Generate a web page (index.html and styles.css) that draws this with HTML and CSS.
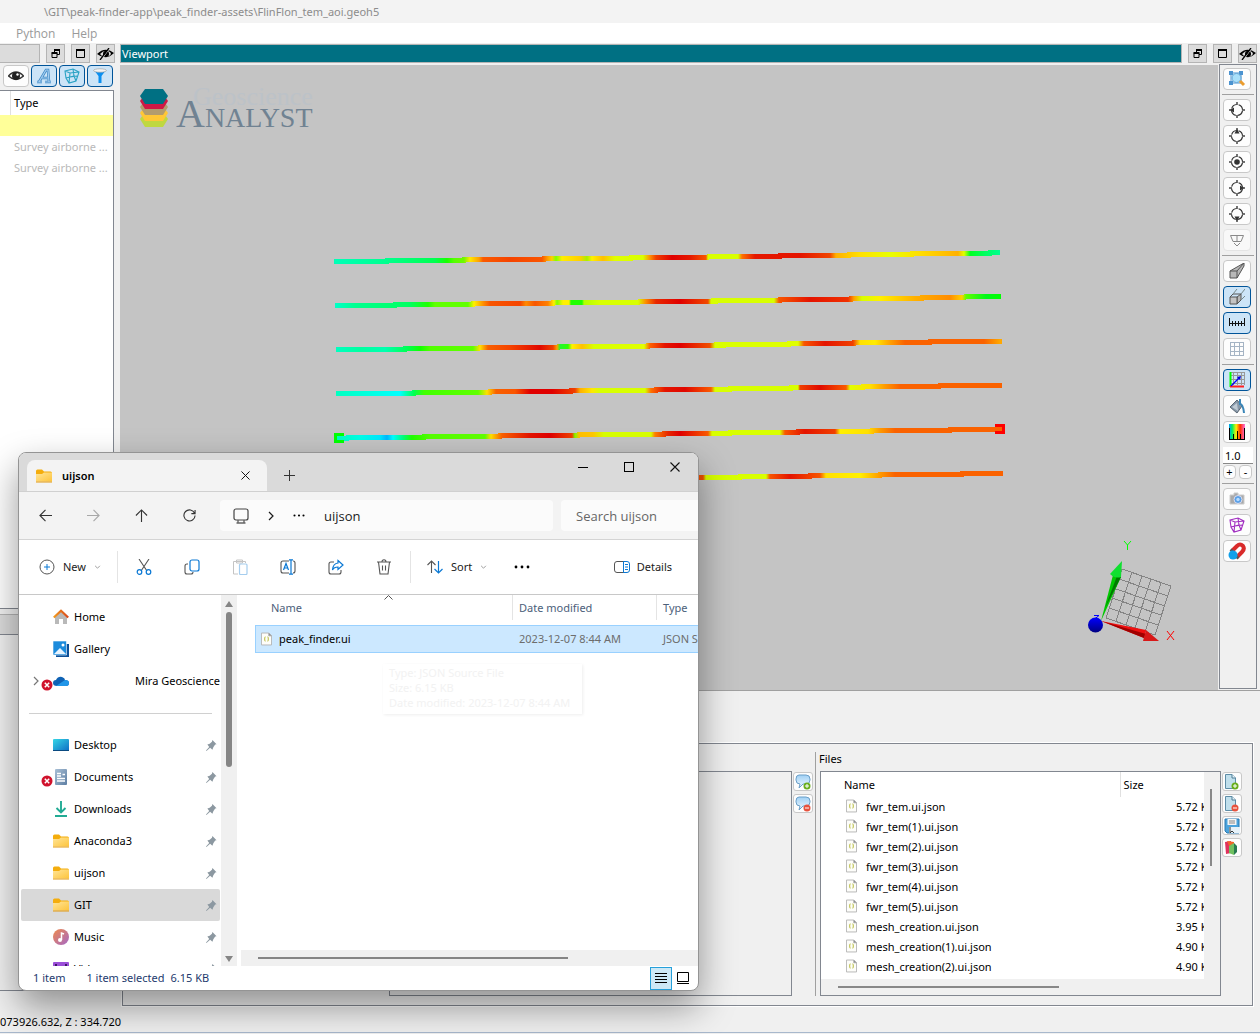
FILE: index.html
```html
<!DOCTYPE html>
<html lang="en">
<head>
<meta charset="utf-8">
<title>Geoscience ANALYST</title>
<link rel="stylesheet" href="styles.css">
</head>
<body>
<svg class="defs" aria-hidden="true">
  <defs>
    <linearGradient id="gFolder" x1="0" y1="0" x2="1" y2="1"><stop offset="0" stop-color="#ffe599"/><stop offset="1" stop-color="#fdc43c"/></linearGradient>
    <linearGradient id="gDesk" x1="0" y1="0" x2="1" y2="1"><stop offset="0" stop-color="#35d7e6"/><stop offset="1" stop-color="#0e6cc4"/></linearGradient>
    <linearGradient id="gMusic" x1="0" y1="0" x2="1" y2="1"><stop offset="0" stop-color="#f08a4b"/><stop offset="1" stop-color="#a468c8"/></linearGradient>
    <linearGradient id="gDoc" x1="0" y1="0" x2="1" y2="1"><stop offset="0" stop-color="#a9c0d6"/><stop offset="1" stop-color="#5d7ea3"/></linearGradient>
    <linearGradient id="gRoof"><stop offset="0" stop-color="#f29a1d"/><stop offset="1" stop-color="#d9471b"/></linearGradient>
    <linearGradient id="gRain"><stop offset="0" stop-color="#00a0ff"/><stop offset=".2" stop-color="#00f060"/><stop offset=".45" stop-color="#ffee00"/><stop offset=".7" stop-color="#ff3000"/><stop offset="1" stop-color="#ff70e0"/></linearGradient>
    <linearGradient id="gBubble" x1="0" y1="0" x2="0" y2="1"><stop offset="0" stop-color="#9fd0f5"/><stop offset="1" stop-color="#f2faff"/></linearGradient>
    <linearGradient id="gBall" x1="0" y1="0" x2="0" y2="1"><stop offset="0" stop-color="#0000ff"/><stop offset="1" stop-color="#000080"/></linearGradient>
  </defs>
  <symbol id="restore" viewBox="0 0 9 9"><path d="M3.500 3V1.500H8.500V5.500H6M1 4.500H6V8.500H1Z" fill="none" stroke="#000"/><path d="M3 1H9M0.500 4H6.500" stroke="#000" stroke-width="2"/></symbol>
  <symbol id="maxi" viewBox="0 0 9 9"><path d="M.5 1.500H8.500V8.500H.5Z" fill="none" stroke="#000"/><path d="M0 1H9" stroke="#000" stroke-width="2"/></symbol>
  <symbol id="hidden" viewBox="0 0 17 12"><path d="M0 6Q8-2 17 5Q9 13 0 6Z" fill="#000"/><path d="M3 6Q6 3 8 3Q5 6 8 9Q5 9 3 6ZM11 3Q14 4 14 6Q13 8 10 9Q12 6 11 3Z" fill="#dcdcdc"/><circle cx="9" cy="6" r="3"/><path d="M4 12L13 0" stroke="#dcdcdc"/><path d="M3 12L12 0" stroke="#000" stroke-width="1.300"/></symbol>
  <symbol id="eye" viewBox="0 0 16 12"><path d="M.5 6Q8-2 15.500 6Q8 13 .5 6Z" fill="#fff" stroke="#333" stroke-width="1.500"/><circle cx="8" cy="6" r="4" fill="#222"/><circle cx="9.500" cy="4.500" r="1.200" fill="#fff"/></symbol>
  <symbol id="wire" viewBox="0 0 16 16"><path d="M1 3L9 1L15 4L12 13L5 15L2 10ZM1 3L6 5L15 4M6 5L5 15M9 1L10 8L12 13M10 8L2 10M6 9L13 8" fill="none" stroke="currentColor" stroke-width="1.100"/></symbol>
  <symbol id="funnel" viewBox="0 0 16 16"><path d="M2 2H14L9.500 8V15H6.500V8Z" fill="#0a8ff0"/><ellipse cx="8" cy="2.500" rx="6.500" ry="1.700" fill="#f4f4f4" stroke="#999" stroke-width=".6"/></symbol>
  <symbol id="ital" viewBox="0 0 16 16"><path d="M1 14H6M9 14H15M3 14L10 2H12L13 14M6 10H12" fill="none" stroke="#3e88c5" stroke-width="2.600"/><path d="M1 14H6M9 14H15M3 14L10 2H12L13 14M6 10H12" fill="none" stroke="#a4cdf0" stroke-width="1.200"/></symbol>
  <symbol id="zoomsel" viewBox="0 0 18 18"><path d="M3 3H13V13H3Z" fill="none" stroke="#4b93d0"/><path d="M1 1H5V5H1ZM11 1H15V5H11ZM1 11H5V15H1Z" fill="#4b93d0"/><circle cx="8.500" cy="8" r="4.500" fill="#a9e0fa" stroke="#62a6d8"/><path d="M12 11L16 15" stroke="#eb9c2d" stroke-width="3"/></symbol>
  <symbol id="ring" viewBox="0 0 16 16"><circle cx="8" cy="8" r="5.500" fill="none" stroke="#333" stroke-width="1.200" stroke-dasharray="6.600 2.040" stroke-dashoffset="-1"/><path d="M0 8H3M13 8H16M8 0V3M8 13V16" stroke="#444" stroke-width="1.500"/></symbol>
  <symbol id="west" viewBox="0 0 16 16"><use href="#ring"/><path d="M1 8L5 5.500V10.500Z" fill="#333"/></symbol>
  <symbol id="north" viewBox="0 0 16 16"><use href="#ring"/><path d="M8 1L5.500 5.500H10.500Z" fill="#333"/></symbol>
  <symbol id="mid" viewBox="0 0 16 16"><use href="#ring"/><circle cx="8" cy="8" r="2.800" fill="#333"/></symbol>
  <symbol id="east" viewBox="0 0 16 16"><use href="#ring"/><path d="M15 8L11 5.500V10.500Z" fill="#333"/></symbol>
  <symbol id="south" viewBox="0 0 16 16"><use href="#ring"/><path d="M8 15L5.500 10.500H10.500Z" fill="#333"/></symbol>
  <symbol id="section" viewBox="0 0 16 16"><path d="M1.500 3.500H14.500L12 9.500H4ZM8 3V10M5 11L8 14L11 11" fill="none" stroke="#888"/></symbol>
  <symbol id="persp" viewBox="0 0 16 16"><path d="M1 8H8V15H1ZM1 8L15 0V3L8 15M8 8L15 0" fill="#b8b8b8" stroke="#555"/></symbol>
  <symbol id="ortho" viewBox="0 0 16 16"><path d="M4 5H12V11L8 15V8L12 5M1 8L4 5" fill="#b8b8b8" stroke="#555"/><path d="M1 8H8V15H1Z" fill="#c4c4c4" stroke="#555"/><path d="M4 5L8 0M12 5L16 0M12 11L16 7" stroke="#788" fill="none"/></symbol>
  <symbol id="ruler" viewBox="0 0 16 16"><path d="M.5 3V11M15.500 3V11M3.500 6V11M6.500 6V11M9.500 6V11M12.500 6V11M0 8.500H16" stroke="#111" fill="none"/></symbol>
  <symbol id="grid" viewBox="0 0 16 16"><path d="M1.500 1V15M5.500 1V15M10.500 1V15M14.500 1V15M1 1.500H15M1 5.500H15M1 10.500H15M1 14.500H15" stroke="#a5b4c4" fill="none"/></symbol>
  <symbol id="axes" viewBox="0 0 16 16"><path d="M4.500 0V13M8.500 0V13M12.500 0V13M2 3.500H16M2 7.500H16M2 11.500H16M15.500 0V13M2 .5H16" stroke="#999" fill="none"/><path d="M1.500 0V15" stroke="#0f0" stroke-width="2"/><path d="M1 14.500H15" stroke="#f22" stroke-width="2"/><path d="M2 14L10 6" stroke="#00f" stroke-width="1.300"/><path d="M12 4L8 5L11 8Z" fill="#00d"/></symbol>
  <symbol id="bucket" viewBox="0 0 16 16"><path d="M1 9L8 2L13 8L8 15Z" fill="#8797a8" stroke="#5a6774"/><path d="M3 9L8 5L9 13Z" fill="#c0cbd5"/><path d="M11 1V6Q14 6 15 15" fill="none" stroke="#3a86b8" stroke-width="2"/></symbol>
  <symbol id="hist" viewBox="0 0 16 16"><path d="M0 0H16V16H0Z" fill="url(#gRain)"/><path d="M.5 4V16M4.500 10V16M8.500 7V16M11.500 10V16M15.500 4V16M0 15.500H16" stroke="#000"/></symbol>
  <symbol id="camera" viewBox="0 0 16 16"><path d="M1 4H5V2H9V4H15V13H1Z" fill="#aaa" stroke="#ccc"/><circle cx="9" cy="8.500" r="4" fill="#5aa0e8" stroke="#dde"/><circle cx="9" cy="8.500" r="1.700" fill="#b7dcff"/></symbol>
  <symbol id="magnet" viewBox="0 0 18 18"><path d="M4 9L9 4Q12 1 15 4Q17 7 14 10L9 15" fill="none" stroke="#d92b2b" stroke-width="4"/><path d="M3 10L5 8M8 16L10 14" stroke="#555" stroke-width="4"/><circle cx="5" cy="13" r="4.500" fill="#10a0ea"/></symbol>
  <symbol id="folder" viewBox="0 0 16 14"><path d="M0 2Q0 .5 1.500 .5H6L8 2.500H14.500Q16 2.500 16 4V12H0Z" fill="#f4ad0d"/><path d="M0 5H6L8 3.500H16V12.500H0Z" fill="url(#gFolder)"/><path d="M0 13H16" stroke="#e29a12"/></symbol>
  <symbol id="json" viewBox="0 0 12 14"><path d="M.5 .5H8.500L11.500 3.500V13.500H.5Z" fill="#fdfdfa" stroke="#b4b4b4"/><path d="M8.500 .5V3.500H11.500" fill="#888" stroke="#aaa"/><path d="M5 4.500Q4 4.500 4 7Q4 9.500 5 9.500M7 4.500Q8 4.500 8 7Q8 9.500 7 9.500" fill="none" stroke="#bcbf48" stroke-width="1.200"/></symbol>
  <symbol id="home" viewBox="0 0 16 16"><path d="M2 7L8 2L14 7V15H10V10H6V15H2Z" fill="#b9b9b9"/><path d="M.8 8.500L8 1.800L15.200 8.500" fill="none" stroke="url(#gRoof)" stroke-width="2.200"/></symbol>
  <symbol id="gallery" viewBox="0 0 16 16"><path d="M3 3H16V16H3Z" fill="#0c4f98"/><path d="M0 0H13.500V14H0Z" fill="#1c8bdc" stroke="#fff" stroke-width=".6"/><path d="M1 13L7 7L13 13Z" fill="#e8f4ff"/><circle cx="10" cy="4" r="1.500" fill="#fff"/></symbol>
  <symbol id="cloud" viewBox="0 0 16 12"><path d="M4 11Q0 11 0 8Q0 5 3 5Q5 1 9 2Q12 3 12 5Q16 5 16 8Q16 11 13 11Z" fill="#0f62b4"/><path d="M3 11L12 5Q16 5 16 8Q16 11 13 11Z" fill="#2196e8"/></symbol>
  <symbol id="err" viewBox="0 0 12 12"><circle cx="6" cy="6" r="5.500" fill="#d0122c"/><path d="M3.800 3.800L8.200 8.200M8.200 3.800L3.800 8.200" stroke="#fff" stroke-width="1.500"/></symbol>
  <symbol id="desk" viewBox="0 0 16 12"><rect width="16" height="12" rx="1" fill="url(#gDesk)"/><path d="M0 11.500H16" stroke="#0a4a80"/></symbol>
  <symbol id="doc" viewBox="0 0 12 16"><rect width="12" height="16" rx="1" fill="url(#gDoc)"/><path d="M2 4.500H6M2 7H6M2 9.500H10M2 12H10M7.500 5.500H10" stroke="#fff" stroke-width="1.300"/></symbol>
  <symbol id="down" viewBox="0 0 12 16"><path d="M6 0V11M1.500 7L6 11.500L10.500 7M0 15H12" fill="none" stroke="#22ab94" stroke-width="1.900"/></symbol>
  <symbol id="music" viewBox="0 0 16 16"><circle cx="8" cy="8" r="8" fill="url(#gMusic)"/><path d="M8.500 11V4L11 5" fill="none" stroke="#fff" stroke-width="1.500"/><circle cx="7" cy="11" r="2" fill="#fff"/></symbol>
  <symbol id="video" viewBox="0 0 16 14"><rect width="16" height="14" rx="1" fill="#9b4fd8"/><path d="M2 3H4M12 3H14" stroke="#3e1768" stroke-width="2"/><path d="M6 4L11 7L6 10Z" fill="#fff"/></symbol>
  <symbol id="pin" viewBox="0 0 12 12"><path d="M7 0L11.500 4.500L10 5L8 8L7 10.500L4.500 8.500L.5 12L0 11.500L3.500 7.500L1.500 5L4 4L6.500 2Z" fill="#8c98a1"/></symbol>
  <symbol id="cut" viewBox="0 0 16 16"><path d="M3 0L11 12M13 0L5 12" stroke="#555" stroke-width="1.100"/><circle cx="3.500" cy="13" r="2.300" fill="none" stroke="#0a78d4" stroke-width="1.200"/><circle cx="12.500" cy="13" r="2.300" fill="none" stroke="#0a78d4" stroke-width="1.200"/></symbol>
  <symbol id="copy" viewBox="0 0 16 16"><path d="M4 5H3Q1 5 1 7V13Q1 15 3 15H7Q9 15 9 13" fill="none" stroke="#555" stroke-width="1.100"/><rect x="6" y="1" width="9" height="11" rx="2" fill="none" stroke="#0a78d4" stroke-width="1.200"/></symbol>
  <symbol id="paste" viewBox="0 0 16 16"><path d="M6 15H1.500V2.500H13.500V4M4.500 1H10.500V4H4.500Z" fill="none" stroke="#c4c4c4"/><rect x="7.500" y="5" width="7.500" height="10.500" rx="1" fill="none" stroke="#a5cdee" stroke-width="1.200"/></symbol>
  <symbol id="rename" viewBox="0 0 16 16"><path d="M9 2H3Q1 2 1 4V12Q1 14 3 14H9M13 2Q15 2 15 4V12Q15 14 13 14" fill="none" stroke="#555" stroke-width="1.100"/><path d="M11 1V15M9 .8H13M9 15.200H13M3.500 11L6 4.500L8.500 11M4.500 9H7.500" fill="none" stroke="#0a78d4" stroke-width="1.200"/></symbol>
  <symbol id="share" viewBox="0 0 16 16"><path d="M6 3H3Q1 3 1 5V13Q1 15 3 15H11Q13 15 13 13V11" fill="none" stroke="#555" stroke-width="1.100"/><path d="M10 1.500L15 6L10 10.500V8Q6 8 4.500 11Q5 4.500 10 4Z" fill="none" stroke="#0a78d4" stroke-width="1.200"/></symbol>
  <symbol id="trash" viewBox="0 0 16 16"><path d="M1 3H15M6 3Q6 .8 8 .8Q10 .8 10 3M2.500 3L4 15H12L13.500 3M6.500 6.500V11.500M9.500 6.500V11.500" fill="none" stroke="#555" stroke-width="1.100"/></symbol>
  <symbol id="sort" viewBox="0 0 16 14"><path d="M4.500 13V1M.5 5L4.500 1L8.500 5" fill="none" stroke="#555" stroke-width="1.100"/><path d="M11.500 1V13M7.500 9L11.500 13L15.500 9" fill="none" stroke="#0a78d4" stroke-width="1.200"/></symbol>
  <symbol id="details" viewBox="0 0 16 12"><path d="M10 .5H3Q.5 .5 .5 3V9Q.5 11.500 3 11.500H10" fill="none" stroke="#555"/><path d="M9.500 .5H13Q15.500 .5 15.500 3V9Q15.500 11.500 13 11.500H9.500ZM11 3.500H14M11 6H14M11 8.500H14" fill="none" stroke="#0a78d4"/></symbol>
  <symbol id="chev" viewBox="0 0 8 5"><path d="M1 1L4 4L7 1" fill="none" stroke="currentColor"/></symbol>
  <symbol id="chevr" viewBox="0 0 6 10"><path d="M1 1L5 5L1 9" fill="none" stroke="currentColor" stroke-width="1.200"/></symbol>
  <symbol id="x" viewBox="0 0 10 10"><path d="M.5 .5L9.500 9.500M9.500 .5L.5 9.500" stroke="#111" fill="none" stroke-width="1.100"/></symbol>
  <symbol id="left" viewBox="0 0 14 14"><path d="M14 7H1M7 1L1 7L7 13" fill="none" stroke="currentColor" stroke-width="1.200"/></symbol>
  <symbol id="right" viewBox="0 0 14 14"><path d="M0 7H13M7 1L13 7L7 13" fill="none" stroke="currentColor" stroke-width="1.200"/></symbol>
  <symbol id="up" viewBox="0 0 14 14"><path d="M7 14V1M1 7L7 1L13 7" fill="none" stroke="currentColor" stroke-width="1.200"/></symbol>
  <symbol id="reload" viewBox="0 0 14 14"><path d="M12.500 4.500A6 6 0 1 0 13 7M13 1V5H9" fill="none" stroke="currentColor" stroke-width="1.200"/></symbol>
  <symbol id="pc" viewBox="0 0 16 16"><rect x="1" y="1" width="14" height="11" rx="2" fill="none" stroke="#444" stroke-width="1.200"/><path d="M5 12V15M11 12V15M3.500 15H12.500" stroke="#666" stroke-width="1.400"/></symbol>
  <symbol id="dots" viewBox="0 0 16 4"><circle cx="2" cy="2" r="1.400"/><circle cx="8" cy="2" r="1.400"/><circle cx="14" cy="2" r="1.400"/></symbol>
  <symbol id="plusbadge" viewBox="0 0 8 8"><circle cx="4" cy="4" r="3.500" fill="#69ae1b"/><path d="M2 4H6M4 2V6" stroke="#fff"/></symbol>
  <symbol id="minusbadge" viewBox="0 0 8 8"><circle cx="4" cy="4" r="3.500" fill="#e7523d"/><path d="M2 4H6" stroke="#fff"/></symbol>
  <symbol id="bubble" viewBox="0 0 16 16"><path d="M4 1H11Q15 1 15 5V6Q15 10 11 10H8L4 14L5 10Q1 10 1 6V5Q1 1 4 1Z" fill="url(#gBubble)" stroke="#6b9fc8"/></symbol>
  <symbol id="page" viewBox="0 0 16 16"><path d="M1.500 .5H8L11.500 4V14.500H1.500Z" fill="#c0dfec" stroke="#5d8ca6"/><path d="M8 .5V4H11.500" fill="#eaf6fb" stroke="#4d7c96"/></symbol>
  <symbol id="bubbleadd" viewBox="0 0 16 16"><use href="#bubble"/><use href="#plusbadge" x="8" y="8" width="8" height="8"/></symbol>
  <symbol id="bubbledel" viewBox="0 0 16 16"><use href="#bubble"/><use href="#minusbadge" x="8" y="8" width="8" height="8"/></symbol>
  <symbol id="pageadd" viewBox="0 0 16 16"><use href="#page"/><use href="#plusbadge" x="7" y="8" width="8" height="8"/></symbol>
  <symbol id="pagedel" viewBox="0 0 16 16"><use href="#page"/><use href="#minusbadge" x="7" y="8" width="8" height="8"/></symbol>
  <symbol id="save" viewBox="0 0 16 16"><path d="M1 1H15V15H3L1 13Z" fill="#4ba3dc" stroke="#2b79b0"/><path d="M3.500 1H12.500V7H3.500Z" fill="#f4f4f4"/><path d="M5 3H11M5 5H11" stroke="#888"/><path d="M5 9H16V15H5Z" fill="#e6f1f8"/><path d="M6 9V15L8 13L10 15" stroke="#333" fill="none"/></symbol>
  <symbol id="cube" viewBox="0 0 16 16"><path d="M1 2L7 1V13L2 14Z" fill="#e0325f"/><path d="M3 1L10 2V6L6 8Z" fill="#f0642a"/><path d="M5 6L10 3V15L5 13Z" fill="#70c060"/><path d="M10 3L13 6V12L10 15Z" fill="#277a50"/></symbol>
</svg>

<header class="titlebar">\GIT\peak-finder-app\peak_finder-assets\FlinFlon_tem_aoi.geoh5</header>
<nav class="menubar"><a href="#">Python</a><a href="#">Help</a></nav>

<main class="workspace">
  <aside class="sidebar">
    <div class="dockhead"><div class="dockname blank"></div><button class="dockbtn" aria-label="Float"><svg width="9" height="9"><use href="#restore"/></svg></button><button class="dockbtn" aria-label="Maximize"><svg width="9" height="9"><use href="#maxi"/></svg></button><button class="dockbtn" aria-label="Hide"><svg width="17" height="12"><use href="#hidden"/></svg></button></div>
    <div class="treetools">
      <button class="tool" aria-label="Show"><svg width="16" height="12"><use href="#eye"/></svg></button>
      <button class="tool on" aria-label="Text"><svg width="16" height="16"><use href="#ital"/></svg></button>
      <button class="tool on cyan" aria-label="Wireframe"><svg width="16" height="16"><use href="#wire"/></svg></button>
      <button class="tool on" aria-label="Filter"><svg width="16" height="16"><use href="#funnel"/></svg></button>
    </div>
    <table class="tree"><thead><tr><th class="cut"></th><th>Type</th></tr></thead>
      <tbody><tr class="hl"><td></td><td></td></tr><tr><td></td><td>Survey airborne ...</td></tr><tr><td></td><td>Survey airborne ...</td></tr><tr class="rest"><td></td><td></td></tr></tbody></table>
    <div class="lowerhead"></div>
    <div class="lowerpane"></div>
  </aside>

  <section class="center">
    <div class="dockhead"><div class="dockname">Viewport</div><button class="dockbtn" aria-label="Float"><svg width="9" height="9"><use href="#restore"/></svg></button><button class="dockbtn" aria-label="Maximize"><svg width="9" height="9"><use href="#maxi"/></svg></button><button class="dockbtn" aria-label="Hide"><svg width="17" height="12"><use href="#hidden"/></svg></button></div>
    <div class="view">
      <svg class="scene" role="img" aria-label="Survey lines">
        <defs>
          <linearGradient id="l1" gradientUnits="userSpaceOnUse" x1="0" x2="1000" y1="0" y2="0"><stop offset=".334" stop-color="#00ffb8"/><stop offset=".385" stop-color="#00ff90"/><stop offset=".435" stop-color="#00ff50"/><stop offset=".447" stop-color="#18ff00"/><stop offset=".454" stop-color="#55ff00"/><stop offset=".464" stop-color="#70f800"/><stop offset=".47" stop-color="#ffe800"/><stop offset=".479" stop-color="#ffa000"/><stop offset=".483" stop-color="#fa5a00"/><stop offset=".51" stop-color="#f54400"/><stop offset=".542" stop-color="#fa5500"/><stop offset=".548" stop-color="#ffa500"/><stop offset=".552" stop-color="#ffd000"/><stop offset=".556" stop-color="#80ff00"/><stop offset=".562" stop-color="#ffee00"/><stop offset=".58" stop-color="#ffd000"/><stop offset=".587" stop-color="#a8f000"/><stop offset=".592" stop-color="#fff000"/><stop offset=".603" stop-color="#ffc000"/><stop offset=".615" stop-color="#e0ff00"/><stop offset=".643" stop-color="#d8ff00"/><stop offset=".65" stop-color="#ff9000"/><stop offset=".656" stop-color="#f04000"/><stop offset=".672" stop-color="#e00000"/><stop offset=".69" stop-color="#e51800"/><stop offset=".706" stop-color="#f85500"/><stop offset=".708" stop-color="#d8ff00"/><stop offset=".738" stop-color="#d8ff00"/><stop offset=".742" stop-color="#ff7000"/><stop offset=".755" stop-color="#e51800"/><stop offset=".8" stop-color="#e41400"/><stop offset=".83" stop-color="#f04500"/><stop offset=".836" stop-color="#ffb000"/><stop offset=".86" stop-color="#ffe000"/><stop offset=".89" stop-color="#e8ff00"/><stop offset=".92" stop-color="#ffdd00"/><stop offset=".958" stop-color="#ffb000"/><stop offset=".964" stop-color="#e0ff00"/><stop offset=".97" stop-color="#00ff20"/><stop offset=".985" stop-color="#00ff60"/><stop offset="1" stop-color="#00ff90"/></linearGradient>
          <linearGradient id="l2" gradientUnits="userSpaceOnUse" x1="0" x2="1000" y1="0" y2="0"><stop offset=".335" stop-color="#00ffc8"/><stop offset=".355" stop-color="#00ff90"/><stop offset=".41" stop-color="#00ff60"/><stop offset=".428" stop-color="#20ff00"/><stop offset=".435" stop-color="#60ff00"/><stop offset=".468" stop-color="#60ff00"/><stop offset=".474" stop-color="#fff000"/><stop offset=".484" stop-color="#ff8800"/><stop offset=".49" stop-color="#f85500"/><stop offset=".52" stop-color="#f54400"/><stop offset=".526" stop-color="#ff8a00"/><stop offset=".535" stop-color="#f85500"/><stop offset=".548" stop-color="#ff8000"/><stop offset=".554" stop-color="#fff000"/><stop offset=".557" stop-color="#80ff00"/><stop offset=".563" stop-color="#fff000"/><stop offset=".569" stop-color="#fff000"/><stop offset=".571" stop-color="#20ff00"/><stop offset=".582" stop-color="#20ff00"/><stop offset=".584" stop-color="#b0ff00"/><stop offset=".6" stop-color="#d8ff00"/><stop offset=".638" stop-color="#d8ff00"/><stop offset=".646" stop-color="#ff8a00"/><stop offset=".656" stop-color="#e82800"/><stop offset=".68" stop-color="#e00000"/><stop offset=".708" stop-color="#f04a00"/><stop offset=".711" stop-color="#d8ff00"/><stop offset=".774" stop-color="#d8ff00"/><stop offset=".779" stop-color="#f85500"/><stop offset=".81" stop-color="#e41400"/><stop offset=".848" stop-color="#f03000"/><stop offset=".854" stop-color="#ffa000"/><stop offset=".862" stop-color="#d8ff00"/><stop offset=".88" stop-color="#fff000"/><stop offset=".915" stop-color="#ffb000"/><stop offset=".95" stop-color="#ff8c00"/><stop offset=".962" stop-color="#ffd000"/><stop offset=".966" stop-color="#60ff00"/><stop offset=".986" stop-color="#00f818"/><stop offset="1" stop-color="#00ff00"/></linearGradient>
          <linearGradient id="l3" gradientUnits="userSpaceOnUse" x1="0" x2="1000" y1="0" y2="0"><stop offset=".336" stop-color="#00ffc0"/><stop offset=".36" stop-color="#00ffa0"/><stop offset=".385" stop-color="#00ffb0"/><stop offset=".408" stop-color="#00ff50"/><stop offset=".42" stop-color="#10ff00"/><stop offset=".43" stop-color="#50ff00"/><stop offset=".473" stop-color="#60ff00"/><stop offset=".48" stop-color="#ffe000"/><stop offset=".488" stop-color="#f86000"/><stop offset=".51" stop-color="#f54400"/><stop offset=".54" stop-color="#e00800"/><stop offset=".553" stop-color="#f04000"/><stop offset=".557" stop-color="#ffa000"/><stop offset=".56" stop-color="#20f830"/><stop offset=".568" stop-color="#30ff00"/><stop offset=".572" stop-color="#fff000"/><stop offset=".582" stop-color="#ffc000"/><stop offset=".594" stop-color="#d8ff00"/><stop offset=".644" stop-color="#e0ff00"/><stop offset=".65" stop-color="#ff6000"/><stop offset=".665" stop-color="#e41400"/><stop offset=".68" stop-color="#e00000"/><stop offset=".71" stop-color="#f05000"/><stop offset=".715" stop-color="#d8ff00"/><stop offset=".798" stop-color="#e0ff00"/><stop offset=".804" stop-color="#f85500"/><stop offset=".825" stop-color="#e41400"/><stop offset=".853" stop-color="#f04000"/><stop offset=".86" stop-color="#ffe000"/><stop offset=".875" stop-color="#ffec00"/><stop offset=".89" stop-color="#ffa000"/><stop offset=".905" stop-color="#fa6200"/><stop offset=".984" stop-color="#fa6200"/><stop offset="1" stop-color="#ffa800"/></linearGradient>
          <linearGradient id="l4" gradientUnits="userSpaceOnUse" x1="0" x2="1000" y1="0" y2="0"><stop offset=".336" stop-color="#00ffc0"/><stop offset=".37" stop-color="#00ffe0"/><stop offset=".4" stop-color="#00ffff"/><stop offset=".414" stop-color="#00ff50"/><stop offset=".424" stop-color="#40ff00"/><stop offset=".478" stop-color="#60ff00"/><stop offset=".487" stop-color="#ffe000"/><stop offset=".496" stop-color="#f86000"/><stop offset=".515" stop-color="#fa5500"/><stop offset=".53" stop-color="#e00000"/><stop offset=".552" stop-color="#e00000"/><stop offset=".575" stop-color="#f04000"/><stop offset=".58" stop-color="#ffb000"/><stop offset=".592" stop-color="#ffe800"/><stop offset=".6" stop-color="#d8ff00"/><stop offset=".645" stop-color="#d8ff00"/><stop offset=".651" stop-color="#ff7000"/><stop offset=".665" stop-color="#e41400"/><stop offset=".685" stop-color="#e00800"/><stop offset=".711" stop-color="#fa5a00"/><stop offset=".715" stop-color="#d8ff00"/><stop offset=".798" stop-color="#d8ff00"/><stop offset=".8" stop-color="#f04000"/><stop offset=".82" stop-color="#e00a00"/><stop offset=".846" stop-color="#fa5a00"/><stop offset=".85" stop-color="#e0ff00"/><stop offset=".87" stop-color="#ffe000"/><stop offset=".885" stop-color="#ff9a00"/><stop offset=".9" stop-color="#fa6200"/></linearGradient>
          <linearGradient id="l5" gradientUnits="userSpaceOnUse" x1="0" x2="1000" y1="0" y2="0"><stop offset=".337" stop-color="#00ffc0"/><stop offset=".36" stop-color="#00ffe8"/><stop offset=".38" stop-color="#00e8ff"/><stop offset=".387" stop-color="#00b8ff"/><stop offset=".393" stop-color="#00ffff"/><stop offset=".403" stop-color="#00ff80"/><stop offset=".412" stop-color="#20ff00"/><stop offset=".43" stop-color="#55ff00"/><stop offset=".485" stop-color="#60ff00"/><stop offset=".491" stop-color="#ffe000"/><stop offset=".502" stop-color="#fa6000"/><stop offset=".53" stop-color="#e41400"/><stop offset=".55" stop-color="#e00000"/><stop offset=".572" stop-color="#f04000"/><stop offset=".575" stop-color="#80ff00"/><stop offset=".579" stop-color="#ffc000"/><stop offset=".593" stop-color="#ffc800"/><stop offset=".604" stop-color="#d8ff00"/><stop offset=".651" stop-color="#d8ff00"/><stop offset=".655" stop-color="#ff8000"/><stop offset=".668" stop-color="#e82800"/><stop offset=".68" stop-color="#e00000"/><stop offset=".708" stop-color="#fa5a00"/><stop offset=".712" stop-color="#d8ff00"/><stop offset=".78" stop-color="#d8ff00"/><stop offset=".785" stop-color="#f85500"/><stop offset=".805" stop-color="#e41400"/><stop offset=".835" stop-color="#f04000"/><stop offset=".84" stop-color="#fff000"/><stop offset=".868" stop-color="#ffe000"/><stop offset=".88" stop-color="#ff9a00"/><stop offset=".895" stop-color="#fa6200"/></linearGradient>
          <linearGradient id="l6" gradientUnits="userSpaceOnUse" x1="0" x2="1000" y1="0" y2="0"><stop offset=".703" stop-color="#f05000"/><stop offset=".706" stop-color="#d8ff00"/><stop offset=".766" stop-color="#d8ff00"/><stop offset=".77" stop-color="#f85500"/><stop offset=".79" stop-color="#e41400"/><stop offset=".82" stop-color="#f85500"/><stop offset=".826" stop-color="#ffe000"/><stop offset=".86" stop-color="#fff000"/><stop offset=".88" stop-color="#ff9a00"/><stop offset=".895" stop-color="#fa6200"/></linearGradient>
        </defs>
        <g transform="translate(-120 -65)">
          <path d="M145 89H163L168 96L163 104H145L140 96Z" fill="#bfd840" transform="translate(0 23)"/>
          <path d="M145 89H163L168 96L163 104H145L140 96Z" fill="#ffc736" transform="translate(0 17)"/>
          <path d="M145 89H163L168 96L163 104H145L140 96Z" fill="#b39c6e" transform="translate(0 11)"/>
          <path d="M145 89H163L168 96L163 104H145L140 96Z" fill="#d01745" transform="translate(0 5)"/>
          <path d="M145 89H163L168 96L163 104H145L140 96Z" fill="#007083"/>
          <text class="geo" x="193" y="105">Geoscience</text>
          <text class="ana" x="176" y="127"><tspan class="big">A</tspan>NALYST</text>
          <g fill="none" stroke-width="5" shape-rendering="crispEdges">
            <path stroke="url(#l1)" d="M334 261.500H389M385 260.500H466M462 259.500H546M542 258.500H633M629 257.500H709M707 256.500H782M778 255.500H851M847 254.500H914M910 253.500H992M988 252.500H1000"/>
            <path stroke="url(#l2)" d="M335 305.500H397M393 304.500H475M471 303.500H555M551 302.500H640M638 301.500H718M711 300.500H782M778 299.500H853M849 298.500H924M920 297.500H966M964 296.500H1001"/>
            <path stroke="url(#l3)" d="M336 349.500H407M403 348.500H480M478 347.500H560M557 346.500H650M646 345.500H726M714 344.500H791M787 343.500H856M852 342.500H932M928 341.500H1002"/>
            <path stroke="url(#l4)" d="M336 393.500H416M412 392.500H492M488 391.500H573M569 390.500H658M654 389.500H732M728 388.500H793M789 387.500H865M861 386.500H941M938 385.500H1002"/>
            <path stroke="url(#l5)" d="M337 438.500H349M346 437.500H426M422 436.500H502M498 435.500H580M577 434.500H666M662 433.500H732M728 432.500H800M796 431.500H874M870 430.500H952M948 429.500H1003"/>
            <path stroke="url(#l6)" d="M690 477.500H742M738 476.500H812M808 475.500H882M878 474.500H964M960 473.500H1003"/>
            <path stroke="#0f0" stroke-width="3" d="M344 434.500H335.500V441.500H344"/>
            <path stroke="#f00" stroke-width="3" d="M995 425.500H1003.500V432.500H995"/>
          </g>
          <path d="M1122 569L1171 586L1155 635L1106 618ZM1132 572L1116 621M1142 576L1126 625M1151 579L1135 628M1161 583L1145 632M1119 579L1168 596M1116 589L1165 606M1112 598L1161 615M1109 608L1158 625" fill="none" stroke="#848484" shape-rendering="crispEdges"/>
          <path d="M1101 621L1113 575L1121 577Z" fill="#00c800"/><path d="M1105 608L1117 576L1121 577Z" fill="#007a00"/><path d="M1122 561L1110 574Q1115 579 1121 577Z" fill="#10e030"/>
          <path d="M1101 621L1146 630L1144 638Z" fill="#f01010"/><path d="M1101 621L1146 634L1144 638Z" fill="#a00000"/><path d="M1159 641L1146 630L1143 641Z" fill="#d81818"/>
          <circle cx="1095.500" cy="625" r="7.500" fill="url(#gBall)"/>
          <path d="M1094 615.500H1099L1094 619.500" fill="none" stroke="#00f"/>
          <path d="M1124 541L1127.500 545L1131 541M1127.500 545V550" fill="none" stroke="#0f0"/>
          <path d="M1167 631L1174 640M1174 631L1167 640" fill="none" stroke="#f00"/>
        </g>
      </svg>
      <div class="viewtools">
        <button class="tool" aria-label="Zoom selection"><svg width="18" height="18"><use href="#zoomsel"/></svg></button>
        <hr>
        <button class="tool" aria-label="West"><svg width="16" height="16"><use href="#west"/></svg></button>
        <button class="tool" aria-label="North"><svg width="16" height="16"><use href="#north"/></svg></button>
        <button class="tool" aria-label="Top"><svg width="16" height="16"><use href="#mid"/></svg></button>
        <button class="tool" aria-label="East"><svg width="16" height="16"><use href="#east"/></svg></button>
        <button class="tool" aria-label="South"><svg width="16" height="16"><use href="#south"/></svg></button>
        <button class="tool off" aria-label="Section"><svg width="16" height="16"><use href="#section"/></svg></button>
        <hr>
        <button class="tool" aria-label="Perspective"><svg width="16" height="16"><use href="#persp"/></svg></button>
        <button class="tool on" aria-label="Orthographic"><svg width="16" height="16"><use href="#ortho"/></svg></button>
        <button class="tool on" aria-label="Scale"><svg width="16" height="16"><use href="#ruler"/></svg></button>
        <button class="tool" aria-label="Grid"><svg width="16" height="16"><use href="#grid"/></svg></button>
        <hr>
        <button class="tool on" aria-label="Axes"><svg width="16" height="16"><use href="#axes"/></svg></button>
        <button class="tool" aria-label="Background"><svg width="16" height="16"><use href="#bucket"/></svg></button>
        <button class="tool" aria-label="Colour scale"><svg width="16" height="16"><use href="#hist"/></svg></button>
        <div class="exag"><input type="text" value="1.0" aria-label="Exaggeration"><button>+</button><button>-</button></div>
        <hr>
        <button class="tool" aria-label="Snapshot"><svg width="16" height="16"><use href="#camera"/></svg></button>
        <button class="tool purple" aria-label="Clipping"><svg width="16" height="16"><use href="#wire"/></svg></button>
        <button class="tool" aria-label="Snap"><svg width="18" height="18"><use href="#magnet"/></svg></button>
      </div>
    </div>
    <section class="data">
      <div class="notes"></div>
      <div class="mini">
        <button aria-label="Add comment"><svg width="16" height="16"><use href="#bubbleadd"/></svg></button>
        <button aria-label="Remove comment"><svg width="16" height="16"><use href="#bubbledel"/></svg></button>
      </div>
      <div class="files">
        <h2>Files</h2>
        <div class="filebox">
          <div class="clip">
          <table>
            <thead><tr><th>Name</th><th class="sz">Size</th></tr></thead>
            <tbody>
              <tr><td><svg width="11" height="14"><use href="#json"/></svg>fwr_tem.ui.json</td><td>5.72 KB</td></tr>
              <tr><td><svg width="11" height="14"><use href="#json"/></svg>fwr_tem(1).ui.json</td><td>5.72 KB</td></tr>
              <tr><td><svg width="11" height="14"><use href="#json"/></svg>fwr_tem(2).ui.json</td><td>5.72 KB</td></tr>
              <tr><td><svg width="11" height="14"><use href="#json"/></svg>fwr_tem(3).ui.json</td><td>5.72 KB</td></tr>
              <tr><td><svg width="11" height="14"><use href="#json"/></svg>fwr_tem(4).ui.json</td><td>5.72 KB</td></tr>
              <tr><td><svg width="11" height="14"><use href="#json"/></svg>fwr_tem(5).ui.json</td><td>5.72 KB</td></tr>
              <tr><td><svg width="11" height="14"><use href="#json"/></svg>mesh_creation.ui.json</td><td>3.95 KB</td></tr>
              <tr><td><svg width="11" height="14"><use href="#json"/></svg>mesh_creation(1).ui.json</td><td>4.90 KB</td></tr>
              <tr><td><svg width="11" height="14"><use href="#json"/></svg>mesh_creation(2).ui.json</td><td>4.90 KB</td></tr>
            </tbody>
          </table>
          </div>
          <div class="vbar"><i></i></div>
          <div class="hbar"><i></i></div>
        </div>
      </div>
      <div class="mini">
        <button aria-label="Add file"><svg width="16" height="16"><use href="#pageadd"/></svg></button>
        <button aria-label="Remove file"><svg width="16" height="16"><use href="#pagedel"/></svg></button>
        <button aria-label="Save file"><svg width="16" height="16"><use href="#save"/></svg></button>
        <button aria-label="Open in app"><svg width="16" height="16"><use href="#cube"/></svg></button>
      </div>
    </section>
  </section>
</main>
<footer class="status">073926.632, Z : 334.720</footer>

<section class="explorer" aria-label="uijson">
  <div class="tabs">
    <div class="tab"><svg width="16" height="14"><use href="#folder"/></svg><b>uijson</b><button aria-label="Close tab"><svg width="9" height="9"><use href="#x"/></svg></button></div>
    <button class="newtab" aria-label="New tab"><svg width="11" height="11"><path d="M5.500 0V11M0 5.500H11" stroke="#333" fill="none"/></svg></button>
    <div class="winbtns">
      <button aria-label="Minimize"><svg width="10" height="10"><path d="M0 5.500H10" stroke="#000"/></svg></button>
      <button aria-label="Maximize"><svg width="10" height="10"><rect x=".5" y=".5" width="9" height="9" fill="none" stroke="#000"/></svg></button>
      <button aria-label="Close"><svg width="10" height="10"><use href="#x"/></svg></button>
    </div>
  </div>
  <div class="navbar">
    <button aria-label="Back"><svg width="13" height="13"><use href="#left"/></svg></button>
    <button class="dim" aria-label="Forward"><svg width="13" height="13"><use href="#right"/></svg></button>
    <button aria-label="Up"><svg width="13" height="13"><use href="#up"/></svg></button>
    <button aria-label="Refresh"><svg width="13" height="13"><use href="#reload"/></svg></button>
    <div class="address"><svg width="16" height="16"><use href="#pc"/></svg><svg width="6" height="10"><use href="#chevr"/></svg><svg width="12" height="3"><use href="#dots"/></svg><span>uijson</span></div>
    <input class="search" type="text" placeholder="Search uijson" aria-label="Search uijson">
  </div>
  <div class="cmdbar">
    <button class="new"><svg width="16" height="16"><circle cx="8" cy="8" r="7" fill="none" stroke="#555"/><path d="M8 5V11M5 8H11" stroke="#0a78d4" fill="none"/></svg>New<svg class="caret" width="7" height="4"><use href="#chev"/></svg></button>
    <span class="vsep"></span>
    <div class="acts">
      <button aria-label="Cut"><svg width="16" height="16"><use href="#cut"/></svg></button>
      <button aria-label="Copy"><svg width="16" height="16"><use href="#copy"/></svg></button>
      <button aria-label="Paste"><svg width="16" height="16"><use href="#paste"/></svg></button>
      <button aria-label="Rename"><svg width="16" height="16"><use href="#rename"/></svg></button>
      <button aria-label="Share"><svg width="16" height="16"><use href="#share"/></svg></button>
      <button aria-label="Delete"><svg width="16" height="16"><use href="#trash"/></svg></button>
    </div>
    <span class="vsep"></span>
    <button class="sortb"><svg width="16" height="14"><use href="#sort"/></svg>Sort<svg class="caret" width="7" height="4"><use href="#chev"/></svg></button>
    <button class="more" aria-label="More"><svg width="18" height="4"><use href="#dots"/></svg></button>
    <button class="det"><svg width="16" height="12"><use href="#details"/></svg>Details</button>
  </div>
  <div class="panes">
    <nav class="places">
      <a href="#"><svg width="16" height="16"><use href="#home"/></svg>Home</a>
      <a href="#"><svg width="16" height="16"><use href="#gallery"/></svg>Gallery</a>
      <a href="#" class="wide"><svg class="exp" width="6" height="10"><use href="#chevr"/></svg><svg class="bad" width="12" height="12"><use href="#err"/></svg><svg width="16" height="12"><use href="#cloud"/></svg><span>Mira Geoscience</span></a>
      <hr>
      <a href="#"><svg width="16" height="12"><use href="#desk"/></svg>Desktop<svg class="pin" width="11" height="11"><use href="#pin"/></svg></a>
      <a href="#"><svg class="bad" width="12" height="12"><use href="#err"/></svg><svg width="16" height="16"><use href="#doc"/></svg>Documents<svg class="pin" width="11" height="11"><use href="#pin"/></svg></a>
      <a href="#"><svg width="16" height="16"><use href="#down"/></svg>Downloads<svg class="pin" width="11" height="11"><use href="#pin"/></svg></a>
      <a href="#"><svg width="16" height="14"><use href="#folder"/></svg>Anaconda3<svg class="pin" width="11" height="11"><use href="#pin"/></svg></a>
      <a href="#"><svg width="16" height="14"><use href="#folder"/></svg>uijson<svg class="pin" width="11" height="11"><use href="#pin"/></svg></a>
      <a href="#" class="sel"><svg width="16" height="14"><use href="#folder"/></svg>GIT<svg class="pin" width="11" height="11"><use href="#pin"/></svg></a>
      <a href="#"><svg width="16" height="16"><use href="#music"/></svg>Music<svg class="pin" width="11" height="11"><use href="#pin"/></svg></a>
      <a href="#"><svg width="16" height="14"><use href="#video"/></svg>Videos<svg class="pin" width="11" height="11"><use href="#pin"/></svg></a>
    </nav>
    <div class="scroll"><svg width="8" height="6"><path d="M0 6L4 0L8 6Z" fill="#858585"/></svg><i></i><svg width="8" height="6"><path d="M0 0L4 6L8 0Z" fill="#858585"/></svg></div>
    <div class="listing">
      <table>
        <thead><tr><th class="n">Name</th><th class="d">Date modified</th><th class="t">Type</th></tr></thead>
        <tbody><tr><td><svg width="11" height="14"><use href="#json"/></svg>peak_finder.ui</td><td>2023-12-07 8:44 AM</td><td>JSON Source File</td></tr></tbody>
      </table>
      <svg class="asc" width="9" height="5"><path d="M.5 4.500L4.500 .5L8.500 4.500" fill="none" stroke="#555"/></svg>
      <div class="tip" role="tooltip">Type: JSON Source File<br>Size: 6.15 KB<br>Date modified: 2023-12-07 8:44 AM</div>
      <div class="hscroll"><i></i></div>
    </div>
  </div>
  <div class="info"><span>1 item</span><span>1 item selected</span><span class="kb">6.15 KB</span>
    <button class="v1" aria-label="Details view"><svg width="12" height="11"><path d="M0 .5H12M0 3.500H12M0 6.500H12M0 9.500H12" stroke="#000"/></svg></button>
    <button aria-label="Large icons"><svg width="12" height="12"><path d="M.5 .5H11.500V9.500H.5ZM0 11.500H12" fill="none" stroke="#000"/></svg></button></div>
</section>
</body>
</html>
```
FILE: styles.css
```css
* { box-sizing: border-box; }
body { margin: 0; min-height: 100vh; display: flex; flex-direction: column; position: relative; overflow: hidden; background: #f0f0f0; color: #000; font: 11px/16px "Noto Sans", "Open Sans", sans-serif; }
button { padding: 0; border: 0; background: none; font: inherit; color: inherit; display: flex; align-items: center; justify-content: center; }
a { color: inherit; text-decoration: none; }
svg { flex: none; }
table { border-collapse: collapse; }
th { font-weight: 400; text-align: left; }
th, td { padding: 0; }
hr { margin: 0; border: 0; }
.defs { position: absolute; width: 0; height: 0; }

.titlebar { height: 23px; padding-left: 44px; background: #f3f3f3; color: #8c8c8c; line-height: 24px; }
.menubar { height: 20px; padding-left: 16px; display: flex; gap: 16px; background: #fff; color: #9a9a9a; font: 12px/22px "Open Sans", sans-serif; }

.workspace { flex: 1; display: flex; gap: 5px; min-height: 0; }
.sidebar { width: 115px; display: flex; flex-direction: column; }
.center { flex: 1; min-width: 0; display: flex; flex-direction: column; }
.dockhead { height: 21px; padding: 1px 0; display: flex; gap: 6px; }
.center .dockhead { padding-right: 3px; }
.dockname { flex: 1; padding-left: 1px; background: #007083; color: #fff; border: 1px solid #b4b4b4; line-height: 18px; }
.dockname.blank { background: #dcdcdc; border-left: 0; }
.dockbtn { width: 19px; background: #dcdcdc; border: 1px solid #b4b4b4; }

.tool { width: 28px; height: 22px; background: #fdfdfd; border: 1px solid #c8c8c8; border-radius: 4px; }
.tool.on { background: #cce4f7; border-color: #005499; }
.tool.off { background: #f8f8f8; border-color: #e4e4e4; }
.cyan { color: #2aa2c4; }
.purple { color: #a02cc0; }
.treetools { height: 26px; padding: 1px 1px 3px 3px; display: flex; gap: 2px; }
.treetools .tool { width: 26px; }
.tree { width: 114px; height: 519px; background: #fff; border: 1px solid #828790; border-left: 0; border-collapse: separate; border-spacing: 0; table-layout: fixed; }
.tree th { height: 24px; padding-left: 3px; }
.tree th.cut { width: 11px; border-right: 1px solid #e0e0e0; }
.tree td { height: 21px; padding-left: 3px; color: #b9b9b9; white-space: nowrap; }
.tree .hl td { background: #ffff99; }
.tree .rest td { height: auto; }
.lowerhead { height: 20px; margin-top: 5px; background: #dcdcdc; border-top: 1px solid #b4b4b4; }
.lowerpane { flex: 1; margin-bottom: 22px; border-top: 1px solid #828790; border-bottom: 1px solid #828790; }

.view { flex: 1; display: flex; border-bottom: 1px solid #a0a0a0; background: #f0f0f0; }
.scene { flex: 1; min-width: 0; height: auto; margin-top: 1px; background: #c4c4c4; border-right: 1px solid #f0f0f0; font-family: "Liberation Serif", serif; }
.geo { font-size: 26px; fill: #bcc2c8; }
.ana { font-size: 28px; fill: #708292; }
.big { font-size: 40px; }
.viewtools { width: 38px; margin: 0 3px 1px 0; padding: 3px 3px 0; border: 1px solid #828790; display: flex; flex-direction: column; gap: 4px; }
.viewtools hr { height: 1px; margin: 0 -1px; background: #a0a0a0; }
.exag { display: grid; grid-template-columns: 13px 13px; gap: 1px 3px; }
.exag input { grid-column: 1 / 3; width: 30px; height: 17px; padding: 0 2px; border: 0; border-bottom: 1px solid #888; background: #fff; font: inherit; }
.exag button { height: 14px; background: #fdfdfd; border: 1px solid #c8c8c8; border-radius: 4px; }

.data { height: 263px; margin: 52px 7px 7px 2px; padding: 8px 8px 9px 266px; display: flex; border: 1px solid #828790; outline: 1px solid #fff; }
.notes { flex: 1; margin-top: 19px; border: 1px solid #828790; }
.mini { width: 22px; padding-top: 20px; display: flex; flex-direction: column; gap: 3px; margin-left: 1px; }
.mini button { width: 20px; height: 19px; background: #fdfdfd; border: 1px solid #c8c8c8; border-radius: 3px; }
.files { flex: 1 1 3px; display: flex; flex-direction: column; padding-left: 4px; border-left: 1px solid #a0a0a0; }
.files h2 { margin: 0 0 0 -1px; height: 19px; font: inherit; line-height: 14px; }
.filebox { flex: 1; display: grid; grid-template: 1fr 16px / 1fr 16px; border: 1px solid #828790; }
.clip { overflow: hidden; background: #fff; height: 207px; }
.clip table { width: 100%; min-width: 383px; table-layout: fixed; white-space: nowrap; }
.clip th { height: 25px; padding-left: 23px; }
.clip .sz { width: 84px; padding-left: 3px; border-left: 1px solid #e0e0e0; }
.clip td { height: 20px; padding-left: 25px; }
.clip td + td { padding-left: 56px; }
.clip td svg { margin-right: 9px; vertical-align: -2px; }
.vbar i { display: block; width: 2px; height: 77px; margin: 17px 0 0 6px; background: #888; }
.hbar i { display: block; width: 221px; height: 2px; margin: 7px 0 0 17px; background: #888; }
.status { height: 20px; border-bottom: 1px solid #a8b8cc; line-height: 18px; margin-bottom: 1px; }

.explorer { position: absolute; left: 18px; top: 452px; width: 681px; height: 539px; display: flex; flex-direction: column; overflow: hidden; background: #fff; border: 1px solid #949494; border-radius: 8px; box-shadow: 0 16px 36px rgba(0, 0, 0, .4); }
.tabs { height: 39px; padding: 7px 0 0 8px; display: flex; background: #dadada; border-bottom: 1px solid #d0d0d0; }
.tab { width: 240px; padding: 0 17px 0 9px; display: flex; align-items: center; gap: 10px; background: #f3f3f3; border-radius: 8px 8px 0 0; }
.tab b { font-weight: 600; }
.tab button { margin-left: auto; }
.newtab { margin-left: 17px; }
.winbtns { margin-left: auto; display: flex; height: 14px; }
.winbtns button { width: 46px; }
.navbar { height: 48px; padding: 8px 0; display: flex; background: #f3f3f3; border-bottom: 1px solid #d4d4d4; color: #333; font: 13px/16px "Open Sans", sans-serif; }
.navbar button { width: 32px; margin-left: 16px; }
.navbar button:first-child { margin-left: 10px; }
.navbar .dim { color: #a8a8a8; }
.address { width: 333px; margin-left: 15px; padding-left: 13px; display: flex; align-items: center; gap: 19px; background: #fbfbfb; border-radius: 4px; color: #1b1b1b; }
.search { flex: 1; min-width: 0; margin-left: 8px; padding: 0 0 0 15px; border: 0; border-radius: 4px 0 0 4px; background: #fbfbfb; font: inherit; }
.search::placeholder { color: #666; opacity: 1; }
.cmdbar { height: 55px; display: flex; align-items: center; border-bottom: 1px solid #c8c8c8; color: #1b1b1b; }
.caret { color: #888; }
.new { margin-left: 20px; width: 62px; gap: 8px; }
.vsep { width: 1px; height: 32px; background: #e4e4e4; margin-left: 16px; }
.acts { display: flex; gap: 32px; margin-left: 18px; }
.acts + .vsep { margin-left: 18px; }
.sortb { margin-left: 16px; gap: 8px; }
.more { margin-left: 26px; }
.det { margin: 0 26px 0 auto; gap: 7px; }
.panes { flex: 1; min-height: 0; display: flex; }
.places { width: 202px; padding: 6px 1px 0 2px; overflow: hidden; }
.places a { height: 32px; padding: 0 3px 0 32px; display: flex; align-items: center; gap: 5px; white-space: nowrap; border-radius: 2px; }
.places .bad { margin: 8px -5px 0 -12px; }
.places .wide { padding-left: 12px; }
.wide .exp { color: #777; margin-right: 9px; }
.wide span { margin-left: 61px; }
.places .sel { background: #d9d9d9; }
.places .pin { margin-left: auto; }
.places hr { height: 1px; margin: 16px 8px 15px 8px; background: #d0d0d0; }
.scroll { width: 16px; padding: 6px 0 4px; display: flex; flex-direction: column; align-items: center; background: #f0f0f0; }
.scroll i { width: 6px; height: 155px; margin: 5px 0 auto; border-radius: 3px; background: #858585; }
.listing { flex: 1; min-width: 0; margin-left: 4px; display: flex; flex-direction: column; overflow: hidden; position: relative; }
.listing table { width: 560px; margin-left: 14px; table-layout: fixed; border-collapse: separate; border-spacing: 0; white-space: nowrap; }
.listing th { height: 25px; color: #4c607a; padding-left: 6px; border-left: 1px solid #e4e4e4; }
.listing .n { width: 257px; padding-left: 16px; border: 0; }
.listing .d { width: 144px; }
.asc { position: absolute; left: 143px; top: 0; }
.listing tbody::before { content: ""; display: block; height: 5px; }
.listing td { height: 28px; padding-left: 7px; background: #cce8ff; border: solid #99d1ff; border-width: 1px 0; color: #6d6d6d; }
.listing td:first-child { padding-left: 5px; border-left-width: 1px; color: #000; }
.listing td svg { margin-right: 7px; vertical-align: -3px; }
.tip { position: absolute; left: 142px; top: 69px; width: 199px; height: 50px; padding: 1px 6px; line-height: 15px; color: #f2f2f2; background: #fff; box-shadow: 1px 1px 3px #eee; white-space: nowrap; }
.hscroll { margin-top: auto; height: 16px; padding: 7px 0 0 17px; background: #f0f0f0; }
.hscroll i { display: block; width: 310px; height: 2px; background: #858585; }
.info { height: 24px; padding: 0 4px 0 14px; display: flex; align-items: center; gap: 21px; color: #1e3a6e; }
.info .kb { margin-left: -15px; }
.info button { width: 22px; height: 23px; }
.info .v1 { margin: 0 -21px 0 auto; background: #cce8f6; border: 1px solid #26a0da; }
```
